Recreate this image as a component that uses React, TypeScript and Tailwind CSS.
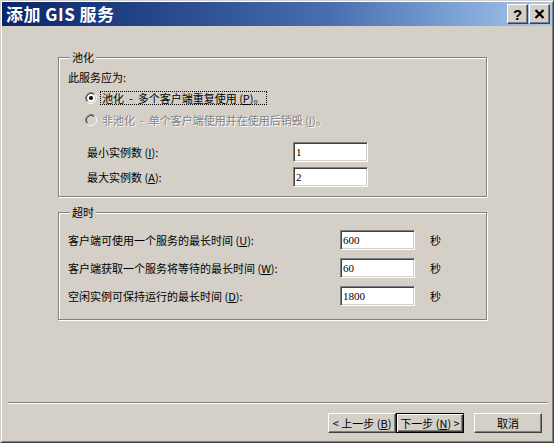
import React from "react";

const F = "font-['Noto_Sans_CJK_SC','Noto_Sans',sans-serif]";
const sunken =
  "border border-t-[#808080] border-l-[#808080] border-b-white border-r-white shadow-[inset_1px_1px_0_#404040,inset_-1px_-1px_0_#d4d0c8]";
const raised =
  "border border-t-white border-l-white border-b-[#404040] border-r-[#404040] shadow-[inset_-1px_-1px_0_#808080]";

function Radio({ checked, disabled }: { checked?: boolean; disabled?: boolean }) {
  return (
    <svg width="12" height="12" viewBox="0 0 12 12" className="shrink-0">
      <circle cx="6" cy="6" r="4.2" fill={disabled ? "#d4d0c8" : "#ffffff"} />
      <path d="M2.11 9.89 A5.5 5.5 0 0 1 9.89 2.11" stroke="#808080" fill="none" />
      <path d="M9.89 2.11 A5.5 5.5 0 0 1 2.11 9.89" stroke="#ffffff" fill="none" />
      <path d="M2.82 9.18 A4.5 4.5 0 0 1 9.18 2.82" stroke="#404040" fill="none" />
      <path d="M9.18 2.82 A4.5 4.5 0 0 1 2.82 9.18" stroke="#d4d0c8" fill="none" />
      {checked && <circle cx="6" cy="6" r="2" fill="#000000" />}
    </svg>
  );
}

function Input({ value }: { value: string }) {
  return (
    <div className={`w-[75px] h-[20px] bg-white ${sunken} flex items-center pl-[2px] text-[11px] leading-[14px] text-black font-['Liberation_Serif',serif]`}>
      {value}
    </div>
  );
}

function Group({ label, children, className }: { label: string; children: React.ReactNode; className?: string }) {
  return (
    <div
      className={`relative w-[429px] border border-[#808080] shadow-[1px_1px_0_#ffffff,inset_1px_1px_0_#ffffff] ${className ?? ""}`}
    >
      <span className="absolute -top-[8px] left-[11px] bg-[#d4d0c8] px-[2px] text-[11px] leading-[14px] text-black">
        {label}
      </span>
      {children}
    </div>
  );
}

export default function App() {
  return (
    <div className={`w-[558px] h-[447px] bg-white ${F}`}>
      <div className="w-[554px] h-[443px] bg-[#d4d0c8] border border-t-[#d4d0c8] border-l-[#d4d0c8] border-r-[#404040] border-b-[#404040] shadow-[inset_1px_1px_0_#ffffff,inset_-1px_-1px_0_#808080] p-[1px] flex flex-col">
        {/* Title bar */}
        <div className="h-[24px] bg-linear-to-r from-[#0a246a] via-[#4a6fb0] via-60% to-[#a6caf0] flex items-center pl-[4px] pr-[2px]">
          <span className="text-white font-bold text-[17px] leading-[20px] tracking-[0.5px]">添加 GIS 服务</span>
          <div className="ml-auto flex gap-[1px]">
            <div className={`w-[21px] h-[20px] bg-[#d4d0c8] ${raised} flex items-center justify-center`}>
              <span className="font-['Liberation_Sans',sans-serif] font-bold text-[15px] leading-[15px] text-black">?</span>
            </div>
            <div className={`w-[21px] h-[20px] bg-[#d4d0c8] ${raised} flex items-center justify-center`}>
              <svg width="11" height="10" viewBox="0 0 11 10">
                <path d="M1.5 1 L9.5 9 M9.5 1 L1.5 9" stroke="#000" strokeWidth="2.2" />
              </svg>
            </div>
          </div>
        </div>

        {/* Body */}
        <div className="flex-1 flex flex-col pl-[56px] text-[11px] leading-[14px] text-black">
          <Group label="池化" className="mt-[31px] pt-[12px] pb-[9px]">
            <div className="pl-[9px]">此服务应为:</div>
            <div className="mt-[7px] pl-[26px] h-[14px] flex items-center gap-[3px]">
              <Radio checked />
              <span className="border border-dotted border-black px-[1px] leading-[12px] whitespace-pre">
                池化  -  多个客户端重复使用 (<u>P</u>)。
              </span>
            </div>
            <div className="mt-[8px] pl-[26px] h-[14px] flex items-center gap-[3px]">
              <Radio disabled />
              <span className="px-[2px] text-[#808080] [text-shadow:1px_1px_0_#ffffff] whitespace-pre">
                非池化  -  单个客户端使用并在使用后销毁 (<u>I</u>)。
              </span>
            </div>
            <div className="mt-[15px] pl-[28px] flex items-center">
              <span className="w-[206px]">最小实例数 (<u>I</u>):</span>
              <Input value="1" />
            </div>
            <div className="mt-[5px] pl-[28px] flex items-center">
              <span className="w-[206px]">最大实例数 (<u>A</u>):</span>
              <Input value="2" />
            </div>
          </Group>

          <Group label="超时" className="mt-[15px] pt-[17px] pb-[13px]">
            {[
              ["客户端可使用一个服务的最长时间 (", "U", "):", "600"],
              ["客户端获取一个服务将等待的最长时间 (", "W", "):", "60"],
              ["空闲实例可保持运行的最长时间 (", "D", "):", "1800"],
            ].map(([a, k, b, v], i) => (
              <div key={i} className={`pl-[9px] flex items-center ${i > 0 ? "mt-[8px]" : ""}`}>
                <span className="w-[272px]">
                  {a}
                  <u>{k}</u>
                  {b}
                </span>
                <Input value={v} />
                <span className="ml-[15px]">秒</span>
              </div>
            ))}
          </Group>
        </div>

        {/* Footer */}
        <div className="flex flex-col">
          <div className="ml-[6px] mr-[4px] h-[2px] border-t border-t-[#808080] border-b border-b-white" />
          <div className="mt-[9px] mb-[8px] flex justify-end pr-[10px] text-[11px] leading-[14px] text-black">
            <div className={`w-[68px] h-[20px] ${raised} flex items-center justify-center`}>
              &lt; 上一步 (<u>B</u>)
            </div>
            <div className="w-[68px] h-[20px] border border-black shadow-[inset_1px_1px_0_#ffffff,inset_-1px_-1px_0_#404040,inset_-2px_-2px_0_#808080] flex items-center justify-center">
              下一步 (<u>N</u>) &gt;
            </div>
            <div className={`ml-[10px] w-[68px] h-[20px] ${raised} flex items-center justify-center`}>
              取消
            </div>
          </div>
        </div>
      </div>
    </div>
  );
}
